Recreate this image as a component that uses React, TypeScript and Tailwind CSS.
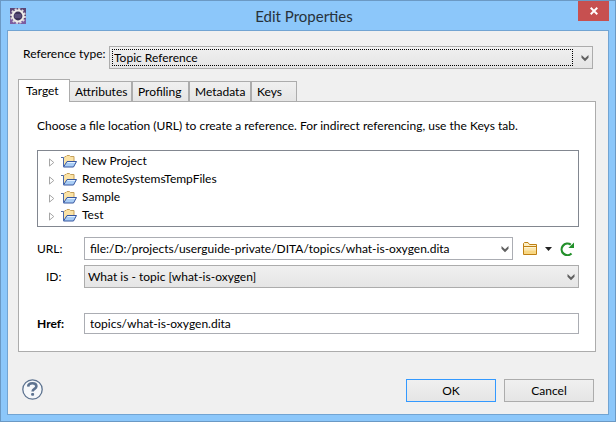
import { useState } from "react";

const tabs = [
  { name: "Target", width: "w-[52px]" },
  { name: "Attributes", width: "w-[62px]" },
  { name: "Profiling", width: "w-[57px]" },
  { name: "Metadata", width: "w-[62px]" },
  { name: "Keys", width: "w-[46px]" },
];

const projects = ["New Project", "RemoteSystemsTempFiles", "Sample", "Test"];

function AppIcon() {
  return (
    <svg width="16" height="16" viewBox="0 0 16 16" aria-hidden="true">
      <rect width="16" height="16" fill="#5b4677" />
      <rect y="11" width="16" height="5" fill="#7c5da0" />
      <circle cx="8" cy="8" r="6.9" fill="none" stroke="#ddd9dc" strokeWidth="2" strokeDasharray="2.1 1.51" />
      <circle cx="8" cy="8" r="5.4" fill="#3b3156" stroke="#eeebe8" strokeWidth="2" />
      <path d="M4.500 7h7M4.500 9h7" stroke="#776a9c" strokeWidth="1" />
    </svg>
  );
}

function Chevron() {
  return (
    <svg
      className="pointer-events-none absolute right-1 top-[9px]"
      width="8"
      height="7"
      viewBox="0 0 8 7"
      aria-hidden="true"
    >
      <path d="M.5 0 4 3.200 7.500 0v2.800L4 6.200.5 2.800z" fill="#606060" />
    </svg>
  );
}

function OpenFolder() {
  return (
    <svg width="16" height="13" viewBox="0 0 16 13" aria-hidden="true">
      <path d="M2.500 11V3L4 1.500h1L6 .5h2.500l1 1h3.500V6.500" fill="#fbe3a6" stroke="#c5a05a" />
      <path d="M0 2.500h2.500v9" fill="none" stroke="#4a68a8" />
      <path d="M2.500 12 6 6.500h9.500L12.500 12z" fill="#a9cdf5" stroke="#3656a0" />
      <path d="M6.500 7.500h7.500" stroke="#e6f2ff" />
    </svg>
  );
}

function BrowseFolder() {
  return (
    <svg width="14" height="13" viewBox="0 0 14 13" aria-hidden="true">
      <path d="M.5 12.500V1.500l1-1h3.500l1.500 2h7v10z" fill="#fdeec4" stroke="#bf8013" />
      <path d="M1 5h12v3.500H1z" fill="#fbe7b0" />
      <path d="M1 8.500h12V12H1z" fill="#f8d783" />
      <path d="M.5 4.500h13" stroke="#bf8013" />
      <path d="M1 5.500h12" stroke="#fff4d2" />
    </svg>
  );
}

function Refresh() {
  return (
    <svg width="14" height="14" viewBox="0 0 14 14" aria-hidden="true">
      <path d="M11.500 11.500A5.800 5.800 0 1 1 10.800 2.600" fill="none" stroke="#22902a" strokeWidth="2.2" />
      <path d="M14 .6V6H8.400z" fill="#22902a" />
    </svg>
  );
}

export default function App() {
  const [active, setActive] = useState("Target");

  return (
    <div
      role="dialog"
      aria-labelledby="title"
      className="border border-[#6b99c4] bg-[#8cc7fa] px-1.5 pb-1.5 font-['Lato','Noto_Sans',sans-serif] text-xs leading-4 text-black"
    >
      <header className="grid h-[29px] grid-cols-[32px_1fr_40px] items-center">
        <div className="pl-[3px]">
          <AppIcon />
        </div>
        <h1 id="title" className="text-center text-[15px] text-[#27323c]">
          Edit Properties
        </h1>
        <button
          type="button"
          aria-label="Close"
          className="flex h-5 w-[31px] items-center justify-center self-start justify-self-end bg-[#c75050]"
        >
          <svg width="8" height="8" viewBox="0 0 8 8" aria-hidden="true">
            <path d="M.7.8l6.6 6.4M7.3.8.7 7.2" stroke="#fff" strokeWidth="1.9" />
          </svg>
        </button>
      </header>

      <main className="border border-[#72a4d2] bg-[#f0f0f0] pt-[15px] pb-3">
        <div className="flex px-[15px]">
          <label htmlFor="type" className="w-[86px] shrink-0 whitespace-nowrap">
            Reference type:
          </label>
          <div className="relative flex-1">
            <select
              id="type"
              className="block h-[23px] w-full appearance-none border border-[#acacac] bg-linear-to-b from-[#f0f0f0] to-[#e5e5e5] pr-5 pl-1 outline-none"
            >
              <option>Topic Reference</option>
            </select>
            <span className="pointer-events-none absolute top-[3px] right-5 bottom-[3px] left-[3px] border border-dotted border-black" />
            <Chevron />
          </div>
        </div>

        <div className="mt-2.5 pr-3 pl-2.5">
          <div role="tablist" className="flex items-end">
            {tabs.map(({ name, width }, i) => (
              <button
                key={name}
                id={`tab-${name}`}
                type="button"
                role="tab"
                aria-selected={name === active}
                aria-controls="panel"
                onClick={() => setActive(name)}
                className={`${width} border-x border-t border-[#acacac] text-left ${
                  name === active
                    ? "relative -mb-px h-[23px] bg-white pl-[7px]"
                    : "h-5 bg-linear-to-b from-[#f0f0f0] to-[#e5e5e5] pl-[5px]"
                } ${i === 1 ? "border-l-0" : ""}`}
              >
                {name}
              </button>
            ))}
          </div>

          <section
            id="panel"
            role="tabpanel"
            aria-labelledby={`tab-${active}`}
            className="border border-[#acacac] bg-white pt-4 pr-4 pb-[17px] pl-[18px]"
          >
            <p className="whitespace-nowrap">
              Choose a file location (URL) to create a reference. For indirect referencing, use the Keys tab.
            </p>

            <ul role="tree" aria-label="Projects" className="mt-4 border border-[#828790] pt-px pb-0.5">
              {projects.map((name) => (
                <li key={name} role="treeitem" aria-expanded="false" className="flex h-[18px] items-center pl-[11px]">
                  <svg width="6" height="9" viewBox="0 0 6 9" className="mr-[6px] mt-0.5" aria-hidden="true">
                    <path d="M.5.9v7.2l4.3-3.6z" fill="#fff" stroke="#a6a6a6" />
                  </svg>
                  <OpenFolder />
                  <span className="pl-[5px]">{name}</span>
                </li>
              ))}
            </ul>

            <div className="mt-2.5 flex items-center">
              <label htmlFor="url" className="w-[47px] shrink-0">
                URL:
              </label>
              <div className="relative flex-1">
                <input
                  id="url"
                  list="recent"
                  defaultValue="file:/D:/projects/userguide-private/DITA/topics/what-is-oxygen.dita"
                  className="block h-[23px] w-full appearance-none border border-[#abadb3] bg-white pr-4 pl-[5px] outline-none [&::-webkit-calendar-picker-indicator]:opacity-0"
                />
                <datalist id="recent">
                  <option value="file:/D:/projects/userguide-private/DITA/topics/what-is-oxygen.dita" />
                </datalist>
                <Chevron />
              </div>
              <div className="flex w-[66px] items-center pl-2.5">
                <button type="button" aria-label="Browse">
                  <BrowseFolder />
                </button>
                <button type="button" aria-label="Browse options" className="mx-2">
                  <svg width="7" height="4" viewBox="0 0 7 4" aria-hidden="true">
                    <path d="M0 0h7L3.5 4z" fill="#222" />
                  </svg>
                </button>
                <button type="button" aria-label="Refresh">
                  <Refresh />
                </button>
              </div>
            </div>

            <div className="mt-[5px] flex items-center">
              <label htmlFor="anchor" className="w-[47px] shrink-0 pl-[9px]">
                ID:
              </label>
              <div className="relative flex-1">
                <select
                  id="anchor"
                  className="block h-[23px] w-full appearance-none border border-[#acacac] bg-linear-to-b from-[#f0f0f0] to-[#e5e5e5] pr-5 pl-[3px] outline-none"
                >
                  <option>What is - topic [what-is-oxygen]</option>
                </select>
                <Chevron />
              </div>
            </div>

            <div className="mt-[25px] flex items-center">
              <label htmlFor="href" className="w-[47px] shrink-0 font-bold">
                Href:
              </label>
              <input
                id="href"
                defaultValue="topics/what-is-oxygen.dita"
                className="h-[21px] flex-1 border border-[#abadb3] bg-white pl-[5px] outline-none"
              />
            </div>
          </section>
        </div>

        <footer className="mt-[27px] flex items-start gap-2 px-3.5">
          <button type="button" aria-label="Help" className="mr-auto">
            <svg width="21" height="21" viewBox="0 0 21 21" aria-hidden="true">
              <circle cx="10.5" cy="10.5" r="9.7" fill="#f6f8fa" stroke="#5d7390" strokeWidth="1.3" />
              <path
                d="M6.200 7.600C6.300 5.200 8.200 4.300 10.400 4.300c2.300 0 4 1 4 3 0 2.700-3.800 2.500-3.800 5.300"
                fill="none"
                stroke="#5d7390"
                strokeWidth="2.6"
              />
              <rect x="9.100" y="14" width="3" height="2.800" rx="1" fill="#5d7390" />
            </svg>
          </button>
          <button
            type="submit"
            className="h-[23px] w-[90px] border border-[#3399ff] bg-linear-to-b from-[#f0f0f0] to-[#e5e5e5]"
          >
            OK
          </button>
          <button
            type="button"
            className="h-[23px] w-[90px] border border-[#acacac] bg-linear-to-b from-[#f0f0f0] to-[#e5e5e5]"
          >
            Cancel
          </button>
        </footer>
      </main>
    </div>
  );
}
